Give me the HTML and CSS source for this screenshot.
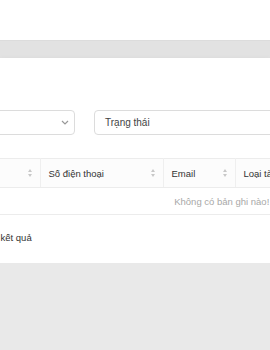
FILE: index.html
```html
<!DOCTYPE html>
<html lang="vi">
<head>
    <meta charset="UTF-8">
    <meta name="viewport" content="width=device-width, initial-scale=1.0">
    <title>Danh sách tài khoản</title>
    <link rel="stylesheet" href="styles.css">
</head>
<body>
    <div class="top"></div>
    <div class="band"></div>
    <div class="card">
        <div class="content">
            <div class="filters">
                <div class="select select-type">
                    <span class="select-text"></span>
                    <svg class="chevron" width="8" height="5" viewBox="0 0 8 5"><path d="M1 1l3 3 3-3" fill="none" stroke="#999" stroke-width="1.2"/></svg>
                </div>
                <div class="select select-status">
                    <span class="select-text">Trạng thái</span>
                </div>
            </div>

            <table class="grid">
                <thead>
                    <tr>
                        <th class="col-name"><span>Họ tên</span><i class="sort"></i></th>
                        <th class="col-phone"><span>Số điện thoại</span><i class="sort"></i></th>
                        <th class="col-email"><span>Email</span><i class="sort"></i></th>
                        <th class="col-type"><span>Loại tài khoản</span><i class="sort"></i></th>
                    </tr>
                </thead>
                <tbody>
                    <tr>
                        <td colspan="4" class="empty">Không có bản ghi nào!</td>
                    </tr>
                </tbody>
            </table>

            <div class="total">Tìm thấy 0 kết quả</div>
        </div>
    </div>
</body>
</html>
```

FILE: styles.css
```css
* {
    box-sizing: border-box;
}
body {
    margin: 0;
    font-family: "Liberation Sans", Arial, sans-serif;
    font-size: 9.5px;
    color: #333;
    background-color: #e9e9e9;
    overflow: hidden;
}
.top {
    height: 40px;
    background-color: #fff;
}
.band {
    height: 18px;
    background-color: #e2e2e2;
    border-top: 1px solid #dcdcdc;
}
.card {
    background-color: #fff;
    height: 205px;
    padding-top: 52px;
    box-shadow: 0 2px 6px rgba(0, 0, 0, 0.08);
    overflow: hidden;
}
.content {
    margin-left: -47px;
    width: 600px;
}
.filters {
    display: flex;
    gap: 19px;
}
.select {
    height: 25px;
    border: 1px solid #dcdcdc;
    border-radius: 4px;
    display: flex;
    align-items: center;
    padding: 0 10px;
}
.select-type {
    width: 122px;
    justify-content: flex-end;
    padding-right: 5px;
}
.select-status {
    width: 220px;
}
.select-text {
    font-size: 10px;
    color: #444;
}
.chevron {
    display: block;
}
.grid {
    margin-top: 23px;
    border-collapse: collapse;
    table-layout: fixed;
    width: 538px;
}
.grid th {
    height: 29px;
    padding: 0 7px 0 8px;
    font-weight: normal;
    text-align: left;
    color: #333;
    background-color: #fcfcfc;
    border-top: 1px solid #ececec;
    border-bottom: 1px solid #ececec;
    border-right: 1px solid #efefef;
    white-space: nowrap;
    overflow: hidden;
}
.grid th span {
    float: left;
}
.col-name {
    width: 87px;
}
.col-phone {
    width: 123px;
}
.col-email {
    width: 72px;
}
.sort {
    float: right;
    width: 5px;
    height: 8px;
    margin-top: 1px;
    position: relative;
}
.sort::before,
.sort::after {
    content: "";
    position: absolute;
    left: 0;
    border-left: 2.5px solid transparent;
    border-right: 2.5px solid transparent;
}
.sort::before {
    top: 0;
    border-bottom: 3px solid #c8c8c8;
}
.sort::after {
    bottom: 0;
    border-top: 3px solid #c8c8c8;
}
.empty {
    height: 27px;
    text-align: center;
    color: #a8a8a8;
    border-bottom: 1px solid #ececec;
}
.total {
    margin-top: 17px;
    color: #333;
}
```
